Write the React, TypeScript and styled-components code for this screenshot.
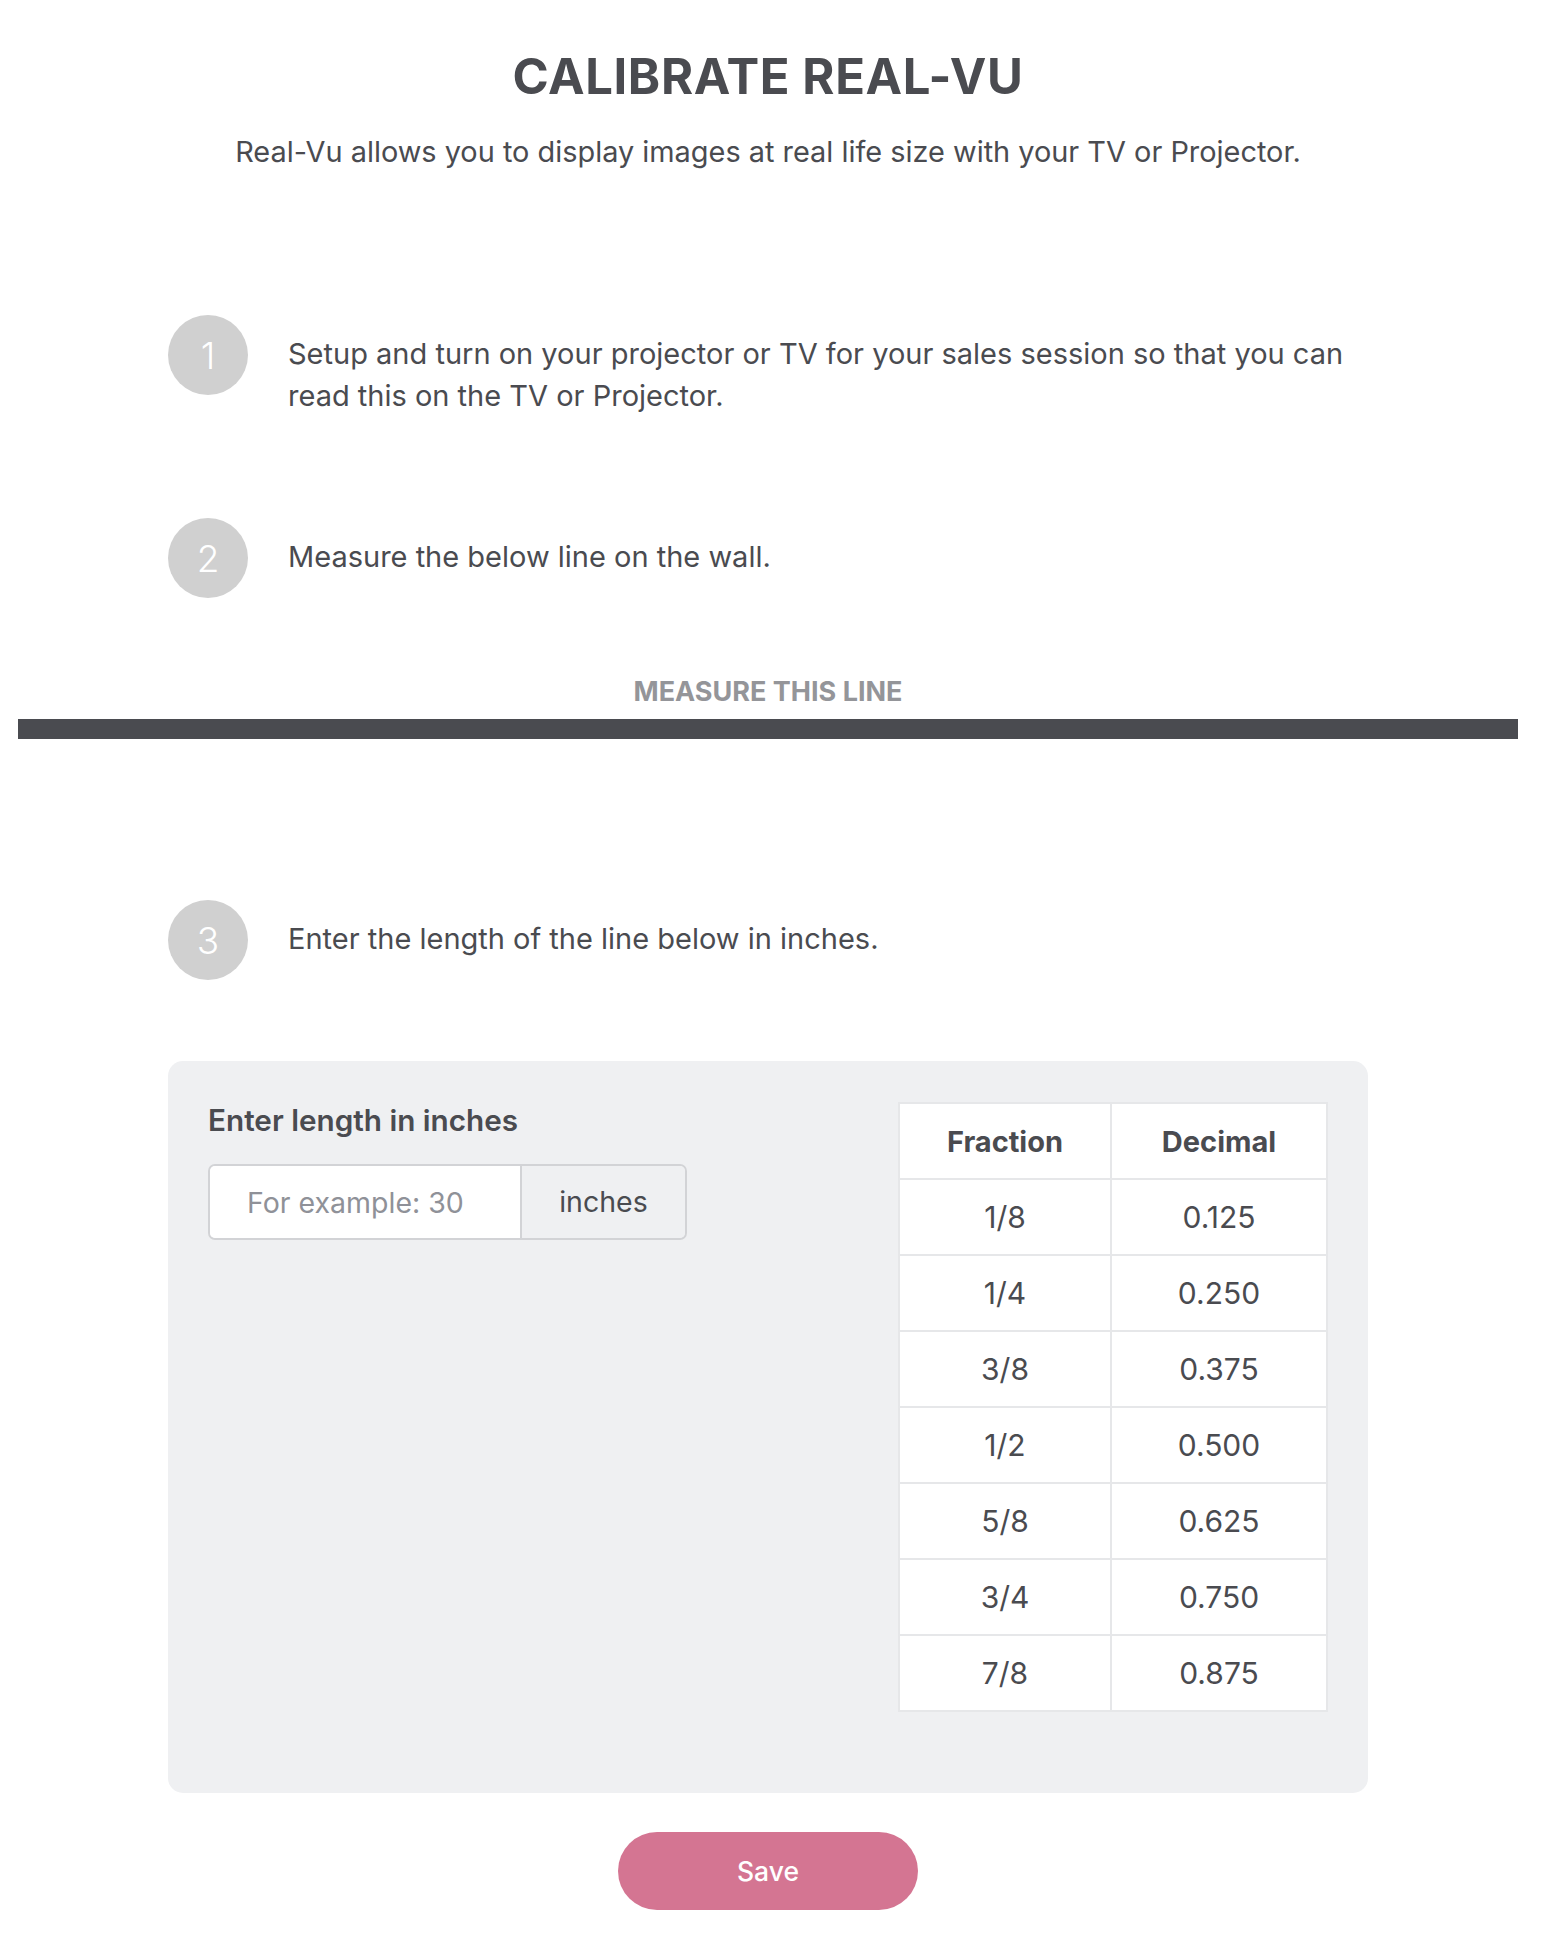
import React from "react";
import styled, { createGlobalStyle } from "styled-components";

const GlobalStyle = createGlobalStyle`
  html, body { margin: 0; padding: 0; background: #ffffff; }
  body { font-family: Inter, "Noto Sans", "Liberation Sans", sans-serif; color: #4a4b50; }
  * { box-sizing: border-box; }
`;

const Page = styled.div`
  width: 1536px;
  padding: 47px 0 24px;
  display: flex;
  flex-direction: column;
  align-items: center;
`;

const Title = styled.h1`
  margin: 0;
  font-size: 49px;
  line-height: 60px;
  font-weight: 700;
  letter-spacing: 0.6px;
  color: #4a4b50;
`;

const Subtitle = styled.p`
  margin: 27px 0 0;
  font-size: 28.9px;
  line-height: 36px;
  font-weight: 400;
  color: #4a4b50;
`;

const Steps = styled.div`
  width: 1200px;
  display: flex;
  flex-direction: column;
`;

const Step = styled.div<{ $top: number }>`
  display: flex;
  align-items: flex-start;
  gap: 40px;
  margin-top: ${(p) => p.$top}px;
`;

const Circle = styled.div`
  flex: 0 0 80px;
  width: 80px;
  height: 80px;
  border-radius: 50%;
  background: #d0d0d0;
  color: #ffffff;
  display: flex;
  align-items: center;
  justify-content: center;
  font-size: 37px;
  font-weight: 300;
`;

const StepText = styled.p`
  margin: 0;
  padding-top: 18px;
  font-size: 29px;
  line-height: 42px;
  max-width: 1080px;
  color: #4a4b50;
`;

const MeasureLabel = styled.div`
  margin-top: 80px;
  font-size: 27px;
  line-height: 28px;
  font-weight: 700;
  color: #949599;
`;

const MeasureLine = styled.div`
  margin-top: 13px;
  width: 1500px;
  height: 20px;
  background: #4a4b50;
`;

const Card = styled.div`
  margin-top: 81px;
  width: 1200px;
  background: #eff0f2;
  border-radius: 15px;
  padding: 41px 40px 81px;
  display: flex;
  justify-content: space-between;
  align-items: flex-start;
`;

const Field = styled.div`
  display: flex;
  flex-direction: column;
  gap: 26px;
`;

const FieldLabel = styled.label`
  font-size: 29.7px;
  line-height: 36px;
  font-weight: 600;
  color: #4a4b50;
`;

const InputGroup = styled.div`
  display: flex;
  width: 479px;
  height: 76px;
  border: 2px solid #d2d3d6;
  border-radius: 7px;
  overflow: hidden;
`;

const Input = styled.input`
  width: 312px;
  border: none;
  border-right: 2px solid #d2d3d6;
  background: #ffffff;
  padding: 0 0 0 37px;
  font-family: inherit;
  font-size: 28.5px;
  color: #4a4b50;
  outline: none;
  &::placeholder { color: #8f9198; }
`;

const Addon = styled.div`
  flex: 1;
  display: flex;
  align-items: center;
  justify-content: center;
  background: #eff0f2;
  font-size: 28.5px;
  color: #4a4b50;
  padding-bottom: 2px;
`;

const Table = styled.table`
  border-collapse: collapse;
  border: 2px solid #e6e7e9;
  background: #ffffff;
`;

const Th = styled.th<{ $w: number }>`
  width: ${(p) => p.$w}px;
  height: 76px;
  border: 2px solid #e6e7e9;
  font-size: 29px;
  font-weight: 700;
  color: #4a4b50;
  text-align: center;
  padding: 0;
`;

const Td = styled.td`
  height: 76px;
  border: 2px solid #e6e7e9;
  font-size: 30px;
  font-weight: 400;
  color: #4a4b50;
  text-align: center;
  padding: 0;
`;

const SaveButton = styled.button`
  margin-top: 39px;
  width: 300px;
  height: 78px;
  border: none;
  border-radius: 39px;
  background: #d47592;
  color: #ffffff;
  font-family: inherit;
  font-size: 26.5px;
  font-weight: 500;
  cursor: pointer;
`;

const rows: [string, string][] = [
  ["1/8", "0.125"],
  ["1/4", "0.250"],
  ["3/8", "0.375"],
  ["1/2", "0.500"],
  ["5/8", "0.625"],
  ["3/4", "0.750"],
  ["7/8", "0.875"],
];

export default function App() {
  return (
    <>
      <GlobalStyle />
      <Page>
        <Title>CALIBRATE REAL-VU</Title>
        <Subtitle>Real-Vu allows you to display images at real life size with your TV or Projector.</Subtitle>
        <Steps>
          <Step $top={145}>
            <Circle>1</Circle>
            <StepText>
              Setup and turn on your projector or TV for your sales session so that you can read this on the TV or Projector.
            </StepText>
          </Step>
          <Step $top={101}>
            <Circle>2</Circle>
            <StepText>Measure the below line on the wall.</StepText>
          </Step>
        </Steps>
        <MeasureLabel>MEASURE THIS LINE</MeasureLabel>
        <MeasureLine />
        <Steps>
          <Step $top={161}>
            <Circle>3</Circle>
            <StepText>Enter the length of the line below in inches.</StepText>
          </Step>
        </Steps>
        <Card>
          <Field>
            <FieldLabel htmlFor="len">Enter length in inches</FieldLabel>
            <InputGroup>
              <Input id="len" placeholder="For example: 30" />
              <Addon>inches</Addon>
            </InputGroup>
          </Field>
          <Table>
            <thead>
              <tr>
                <Th $w={212}>Fraction</Th>
                <Th $w={216}>Decimal</Th>
              </tr>
            </thead>
            <tbody>
              {rows.map(([f, d]) => (
                <tr key={f}>
                  <Td>{f}</Td>
                  <Td>{d}</Td>
                </tr>
              ))}
            </tbody>
          </Table>
        </Card>
        <SaveButton>Save</SaveButton>
      </Page>
    </>
  );
}
